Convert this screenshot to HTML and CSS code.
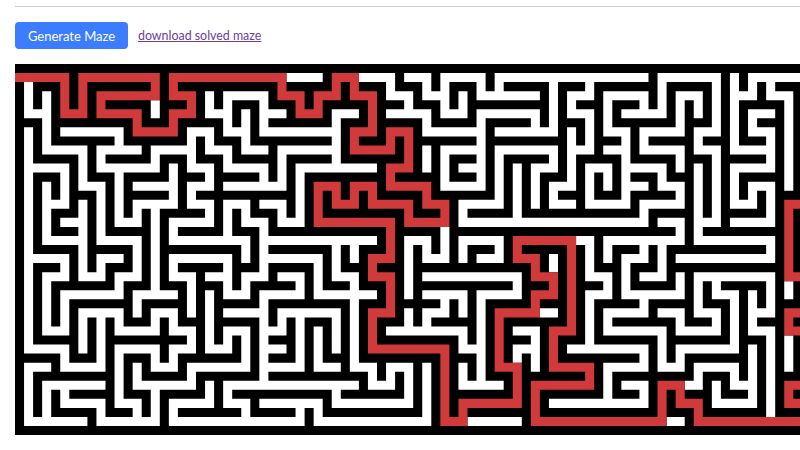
FILE: index.html
```html
<!DOCTYPE html>
<html lang="en">
<head>
    <meta charset="UTF-8">
    <title>Maze</title>
    <link rel="stylesheet" href="styles.css">
</head>
<body>

    <div class="page">
        <hr class="rule">

        <div class="toolbar">
            <button class="button" type="button">Generate Maze</button>
            <a class="download" href="#">download solved maze</a>
        </div>

        <svg class="maze" viewBox="0 0 87 41" xmlns="http://www.w3.org/2000/svg">
            <path id="paths" fill="#fff"></path>
            <path id="solution" fill="#d03a3a"></path>
        </svg>
    </div>

    <script src="maze.js"></script>
</body>
</html>
```

FILE: styles.css
```css
* {
    margin: 0;
    padding: 0;
    box-sizing: border-box;
}

body {
    font-family: Lato, Arial, sans-serif;
    background-color: #fff;
    overflow: hidden;
}

.page {
    height: 450px;
    padding: 6px 0 0 15px;
    overflow: hidden;
}

.rule {
    border: 0;
    border-top: 1px solid #ccc;
}

.toolbar {
    display: flex;
    align-items: center;
    gap: 10px;
    margin-top: 15px;
}

.button {
    width: 113px;
    height: 27px;
    font-family: inherit;
    font-size: 13px;
    color: #fff;
    background-color: #3c7cff;
    border: 0;
    border-radius: 4px;
}

.download {
    font-size: 12.4px;
    color: #6a3ea1;
}

.maze {
    display: block;
    width: 787.35px;
    height: 371.05px;
    margin-top: 15px;
    background-color: #000;
}
```

FILE: maze.js
```js
// # wall, . open path, r solved route
var rows = [
    "#######################################################################################",
    "rrrrrr#rrrrrrrrr#rrrrrrrrrrr" + "rr....#rrr....#...#.....#...." + ".............#.......#.#......",
    "#.###r#r#######r#r##########" + "#r#####r#r###.###.#.###.#.###" + "##.###.#######.#####.#.#.#.###",
    "#.#.#r#r#rrrrrrr#rrr#.#....." + "#rrr#rrr#rrr#...#...#.#......" + ".#.#...#.....#.#...#.#...#...#",
    "#.#.#r#r#r#####.###r#.#.###." + "###r#r#####r###.###.#.#######" + "##.#.###.###.#.#.#.#.#.#####.#",
    "#...#rrr#rrrrr#.#rrr#...#.#." + "..#rrr#...#r#.....#...#......" + ".#.#...#.#.....#.#.#.#.#...#.#",
    "###.#########r###r#####.#.#." + "#######.###r#####.#####.#####" + ".#.###.#.#######.###.#.#.###.#",
    "#.#.#.......#rrrrr#...#...#." + "........#rrr#rrr#.......#...." + "...#.#.#...#.....#...#.#...#.#",
    "#.#.#######.#######.#.###.##" + "#######.#r###r#r#######.#####" + "####.#.###.#.#####.###.###.#.#",
    "#.#.....#.....#.....#...#..." + "#.......#rrrrr#r#.#.....#...." + "...#...#...#.....#...#.....#.#",
    "#.#####.#.#####.###.###.####" + "#.#####.#######r#.#.###.#.###" + "##.#.#####.#####.###.#####.#.#",
    "#.....#.#.......#.#...#....." + "#.#.........#rrr#.#.#...#.#.#" + "...#.#...#.....#.#.#.#.....#.#",
    "#.###.#.###.#####.###.#####." + "#.#.#########r#####.###.#.#.#" + ".###.#.#.#.###.###.#.#.#####.#",
    "#.#.#.#...#.#.....#...#....." + "..#.#rrr#rrr#rrrrr#.....#.#.#" + ".#...#.#.#...#...#.#.#.#...#.#",
    "#.#.#.###.#.#####.#.########" + "###.#r#r#r#r#####r#######.#.#" + ".#.###.###.#####.#.#.#.#.#.###",
    "#.#...#.#.#.#.....#...#...#." + "..#.#r#rrr#rrrrr#rrr#.....#.#" + ".#...#.....#.....#.#.#...#.#rr",
    "#.#.###.#.#.#.#.#####.#.#.##" + "#.#.#r#########r###r#.#####.#" + "############.#####.#.#####.#r#",
    "#.#.#...#.#...#.#.....#.#..." + "#...#rrrrrrrrr#rrrrr#........" + ".............#...#...#.....#r#",
    "#.#.###.#.#####.#.#####.###." + "#############r#####.#########" + "################.#.#########r#",
    "#.#.....#.....#.#.........#." + "............#r#...#.#.....#rr" + "rrrrr..#.........#.........#r#",
    "#.#####.#####.#.#########.#." + "#######.#.###r#.#.#.#.###.#r#" + "####r#.#.###.#.###########.#r#",
    "#.....#.#...#.#.#.......#.#." + "......#.#.#rrr#.#...#.#...#rr" + "r#.#r#.#.#...#.#...........#r#",
    "#.###.#.#.###.#.#.#####.###." + "#####.#.###r###.#############" + "r#.#r#.###.###.#############r#",
    "#.#...#...#...#.#...#...#..." + "#...#.#...#rrr#.#...........#" + "rrr#r#...#.#...#.#.........#rr",
    "#.#.#######.###.###.###.#.##" + "###.#.###.###r#.###########.#" + "##r#r###.#.#####.#.#.#####.#.#",
    "#.#.#.......#.....#.#.#...#." + "....#.......#r#.#.....#.....#" + "rrr#r#...#.......#.#...#.#.#.#",
    "#.#.#.#######.#####.#.#####." + "#########.###r#####.#.#.#####" + "r###r#.#####.#####.###.#.#.###",
    "#.#.#.#.....#.#...#.#.#....." + "#.......#.#rrr#.#...#.#.#rrrr" + "r..#r#.#.....#...#...#.#...#rr",
    "#.#.#.#.#.#.###.#.###.#####." + "#.#.###.#.#r###.#.#####.#r###" + "####r#.#.#######.###.#.#.###r#",
    "#.#...#.#.#.....#...#.#...#." + "..#.#.#.#.#r#.........#.#r#.." + ".#rrr#.#.......#.....#.#...#rr",
    "#.#####.#.#########.#.#.#.#." + "###.#.#.#.#r#########.#.#r###" + ".#r###.#######.#######.###.#.#",
    "#.....#.#.#.....#...#...#.#." + "..#.#.#.#.#rrrrrrrrr#...#r#.." + ".#r#.........#.#.......#.#.#.#",
    "#####.###.#.###.#.#######.#." + "###.#.###.#########r###.#r#.#" + ".#r#########.#.#.#######.#.#.#",
    "#...#.....#.#.#...#.......#." + "....#...#...#...#.#r#.#.#rrr#" + ".#rrrrr#.....#...#.....#.#.#.#",
    "#.#########.#.#####.#######." + "###########.#.#.#.#r#.#.###r#" + "######r#.#########.###.#.#.###",
    "#.#.......#.#.......#.#....." + "..........#...#.#.#r#.....#r#" + "rrrrrrr#.#...#rrr..#.#...#.#rr",
    "#.#.#.#####.###.#####.#.####" + "#######.#######.#.#r#######r#" + "r#######.###.#r#r###.###.#.#r#",
    "#.#.#.....#...#.#.....#...#." + "......#.........#.#r#rrrrrrr#" + "r#...........#r#rrr#.....#.#rr",
    "#.#.#####.###.#.#.#######.##" + "###.#.###########.#r#r#######" + "r#############r###r#######.###",
    "#.......#.......#..........." + "....#.............#rrr......#" + "rrrrrrrrrrrrrrr..#rrrrrrrrrrrr",
    "#######################################################################################"
];

function buildPath(mark) {
    var d = "";
    rows.forEach(function (row, y) {
        var x = 0;
        while (x < row.length) {
            if (row[x] === mark) {
                var start = x;
                while (row[x] === mark) x++;
                d += "M" + start + " " + y + "h" + (x - start) + "v1h" + (start - x) + "z";
            } else {
                x++;
            }
        }
    });
    return d;
}

document.getElementById("paths").setAttribute("d", buildPath("."));
document.getElementById("solution").setAttribute("d", buildPath("r"));
```
